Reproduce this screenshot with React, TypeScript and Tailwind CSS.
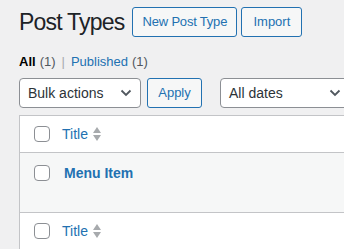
const font = { fontFamily: '"Liberation Sans", Arial, sans-serif' };

function Checkbox() {
  return <span className="block w-4 h-4 rounded-[4px] border border-[#8c8f94] bg-white" />;
}

function SortIcon() {
  return (
    <svg width="8" height="16" viewBox="0 0 8 16" className="ml-[5px]">
      <path d="M4 1 L8 7 L0 7 Z" fill="#a7aaad" />
      <path d="M0 9 L8 9 L4 15 Z" fill="#a7aaad" />
    </svg>
  );
}

function Chevron() {
  return (
    <svg width="12" height="8" viewBox="0 0 12 8">
      <path d="M1.5 1.5 L6 6 L10.5 1.5" fill="none" stroke="#50575e" strokeWidth="1.8" />
    </svg>
  );
}

function TitleHeader() {
  return (
    <div className="h-[36px] flex items-center">
      <div className="w-[42px] flex justify-center pl-[1px]">
        <Checkbox />
      </div>
      <span className="text-[14px] text-[#2271b1]">Title</span>
      <SortIcon />
    </div>
  );
}

export default function App() {
  return (
    <div className="w-[344px] h-[249px] overflow-hidden bg-[#f0f0f1] text-[#3c434a]" style={font}>
      <div className="pl-[19px] pt-[7px] w-[600px]">
        <div className="flex items-start">
          <h1 className="text-[23px] leading-[30px] text-[#1d2327] mr-[8px] tracking-[-0.8px]">Post Types</h1>
          <button className="h-[30px] w-[105px] text-[13px] tracking-[-0.2px] text-[#2271b1] border border-[#2271b1] rounded-[3px] bg-[#f6f7f7]">
            New Post Type
          </button>
          <button className="h-[30px] ml-[4px] w-[61px] text-[13px] text-[#2271b1] border border-[#2271b1] rounded-[3px] bg-[#f6f7f7]">
            Import
          </button>
        </div>
        <div className="mt-[17px] text-[13px] leading-[16px] flex items-center">
          <span className="font-semibold text-[#000]">All</span>
          <span className="ml-[4px] text-[#50575e]">(1)</span>
          <span className="mx-[6px] text-[#a7aaad]">|</span>
          <span className="text-[#2271b1]">Published</span>
          <span className="ml-[4px] text-[#50575e]">(1)</span>
        </div>
        <div className="mt-[8px] flex items-center">
          <div className="w-[122px] h-[30px] border border-[#8c8f94] rounded-[4px] bg-white flex items-center justify-between pl-[8px] pr-[8px] text-[14px] text-[#2c3338]">
            <span>Bulk actions</span>
            <Chevron />
          </div>
          <button className="ml-[6px] w-[55px] h-[30px] text-[13px] text-[#2271b1] border border-[#2271b1] rounded-[3px] bg-[#f6f7f7]">
            Apply
          </button>
          <div className="ml-[18px] w-[130px] h-[30px] border border-[#8c8f94] rounded-[4px] bg-white flex items-center justify-between pl-[8px] pr-[8px] text-[14px] text-[#2c3338]">
            <span>All dates</span>
            <Chevron />
          </div>
        </div>
        <div className="mt-[7px] border border-[#c3c4c7] bg-white w-[500px]">
          <div className="border-b border-[#c3c4c7]">
            <TitleHeader />
          </div>
          <div className="h-[60px] bg-[#f6f7f7] border-b border-[#c3c4c7] flex items-start pt-[12px]">
            <div className="w-[42px] flex justify-center pl-[1px]">
              <Checkbox />
            </div>
            <span className="ml-[2px] text-[14px] leading-[16px] font-semibold text-[#2271b1]">Menu Item</span>
          </div>
          <TitleHeader />
        </div>
      </div>
    </div>
  );
}
